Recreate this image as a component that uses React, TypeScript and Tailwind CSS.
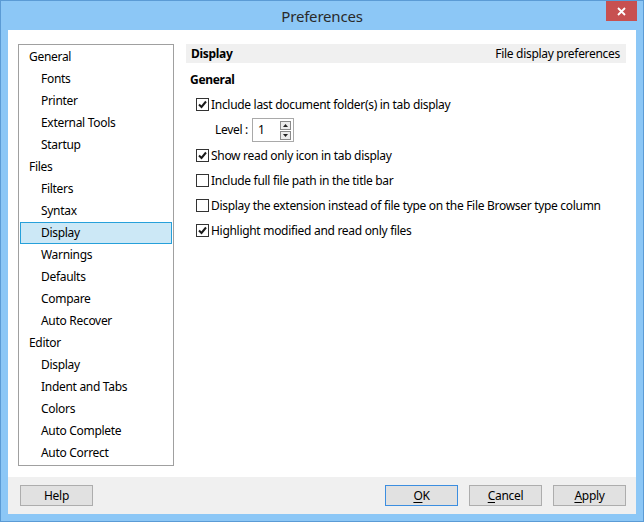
import React from 'react';

const tree: { label: string; child?: boolean; selected?: boolean }[] = [
  { label: 'General' },
  { label: 'Fonts', child: true },
  { label: 'Printer', child: true },
  { label: 'External Tools', child: true },
  { label: 'Startup', child: true },
  { label: 'Files' },
  { label: 'Filters', child: true },
  { label: 'Syntax', child: true },
  { label: 'Display', child: true, selected: true },
  { label: 'Warnings', child: true },
  { label: 'Defaults', child: true },
  { label: 'Compare', child: true },
  { label: 'Auto Recover', child: true },
  { label: 'Editor' },
  { label: 'Display', child: true },
  { label: 'Indent and Tabs', child: true },
  { label: 'Colors', child: true },
  { label: 'Auto Complete', child: true },
  { label: 'Auto Correct', child: true },
];

function Check({ on }: { on?: boolean }) {
  return (
    <span className="flex h-[13px] w-[13px] shrink-0 items-center justify-center border border-[#333] bg-white">
      {on && (
        <svg width="9" height="9" viewBox="0 0 9 9">
          <path d="M1 4.5 L3.5 7 L8 1.5" fill="none" stroke="#1a1a1a" strokeWidth="2" />
        </svg>
      )}
    </span>
  );
}

function Option({ on, children }: { on?: boolean; children: React.ReactNode }) {
  return (
    <div className="flex h-[25px] items-center gap-[2px] pl-[6px]">
      <Check on={on} />
      <span>{children}</span>
    </div>
  );
}

function Button({ children, focused }: { children: React.ReactNode; focused?: boolean }) {
  return (
    <div
      className={`flex h-[21px] w-[73px] items-center justify-center border bg-[#e1e1e1] ${
        focused ? 'border-[#3c8ee0]' : 'border-[#adadad]'
      }`}
    >
      {children}
    </div>
  );
}

export default function App() {
  return (
    <div
      className="flex h-[522px] w-[644px] flex-col border border-[#5b9bd5] bg-[#8cc7f6] text-[12px] tracking-[-0.3px] text-black"
      style={{ fontFamily: '"Noto Sans", "Open Sans", sans-serif' }}
    >
      <div className="relative flex h-[29px] shrink-0 items-center justify-center">
        <span className="pt-[1px] text-[15px] tracking-[-0.2px] text-[#2a2a2a]">Preferences</span>
        <div className="absolute right-[6px] top-0 flex h-[20px] w-[31px] items-center justify-center bg-[#c75050]">
          <svg width="9" height="9" viewBox="0 0 9 9">
            <path d="M1 1 L8 8 M8 1 L1 8" stroke="white" strokeWidth="1.8" />
          </svg>
        </div>
      </div>

      <div className="mx-[7px] mb-[7px] flex flex-1 flex-col bg-white">
        <div className="flex flex-1 gap-[12px] pl-[10px] pt-[14px]">
          <div className="flex h-[422px] w-[156px] flex-col border border-[#a0a0a0] pt-[1px]">
            {tree.map((t, i) => (
              <div
                key={i}
                className={`mx-[1px] flex h-[22px] items-center border ${
                  t.selected ? 'border-[#26a0da] bg-[#cce8f6]' : 'border-transparent'
                } ${t.child ? 'pl-[20px]' : 'pl-[8px]'}`}
              >
                {t.label}
              </div>
            ))}
          </div>

          <div className="flex w-[440px] flex-col">
            <div className="flex h-[19px] items-center justify-between bg-[#f0f0f0] pl-[5px] pr-[6px]">
              <span className="font-bold">Display</span>
              <span>File display preferences</span>
            </div>
            <div className="mt-[8px] pl-[4px] font-bold">General</div>
            <div className="mt-[3px] flex flex-col pl-[4px]">
              <Option on>Include last document folder(s) in tab display</Option>
              <div className="flex h-[26px] items-center pl-[25px]">
                <span>Level :</span>
                <div className="ml-[4px] flex h-[24px] w-[42px] items-center justify-between border border-[#a9a9a9] pl-[5px] pr-[2px]">
                  <span>1</span>
                  <div className="flex flex-col gap-[1px]">
                    <div className="flex h-[9px] w-[11px] items-center justify-center border border-[#8a8a8a] bg-[#ececec]">
                      <svg width="5" height="3" viewBox="0 0 5 3">
                        <path d="M0 3 L2.5 0 L5 3 Z" fill="#222" />
                      </svg>
                    </div>
                    <div className="flex h-[9px] w-[11px] items-center justify-center border border-[#8a8a8a] bg-[#ececec]">
                      <svg width="5" height="3" viewBox="0 0 5 3">
                        <path d="M0 0 L2.5 3 L5 0 Z" fill="#222" />
                      </svg>
                    </div>
                  </div>
                </div>
              </div>
              <Option on>Show read only icon in tab display</Option>
              <Option>Include full file path in the title bar</Option>
              <Option>Display the extension instead of file type on the File Browser type column</Option>
              <Option on>Highlight modified and read only files</Option>
            </div>
          </div>
        </div>

        <div className="flex h-[37px] shrink-0 items-start bg-[#f0f0f0] pl-[12px] pr-[10px] pt-[8px]">
          <Button>Help</Button>
          <div className="ml-auto flex gap-[11px]">
            <Button focused>
              <span className="underline underline-offset-2">O</span>K
            </Button>
            <Button>
              <span className="underline underline-offset-2">C</span>ancel
            </Button>
            <Button>
              <span className="underline underline-offset-2">A</span>pply
            </Button>
          </div>
        </div>
      </div>
    </div>
  );
}
